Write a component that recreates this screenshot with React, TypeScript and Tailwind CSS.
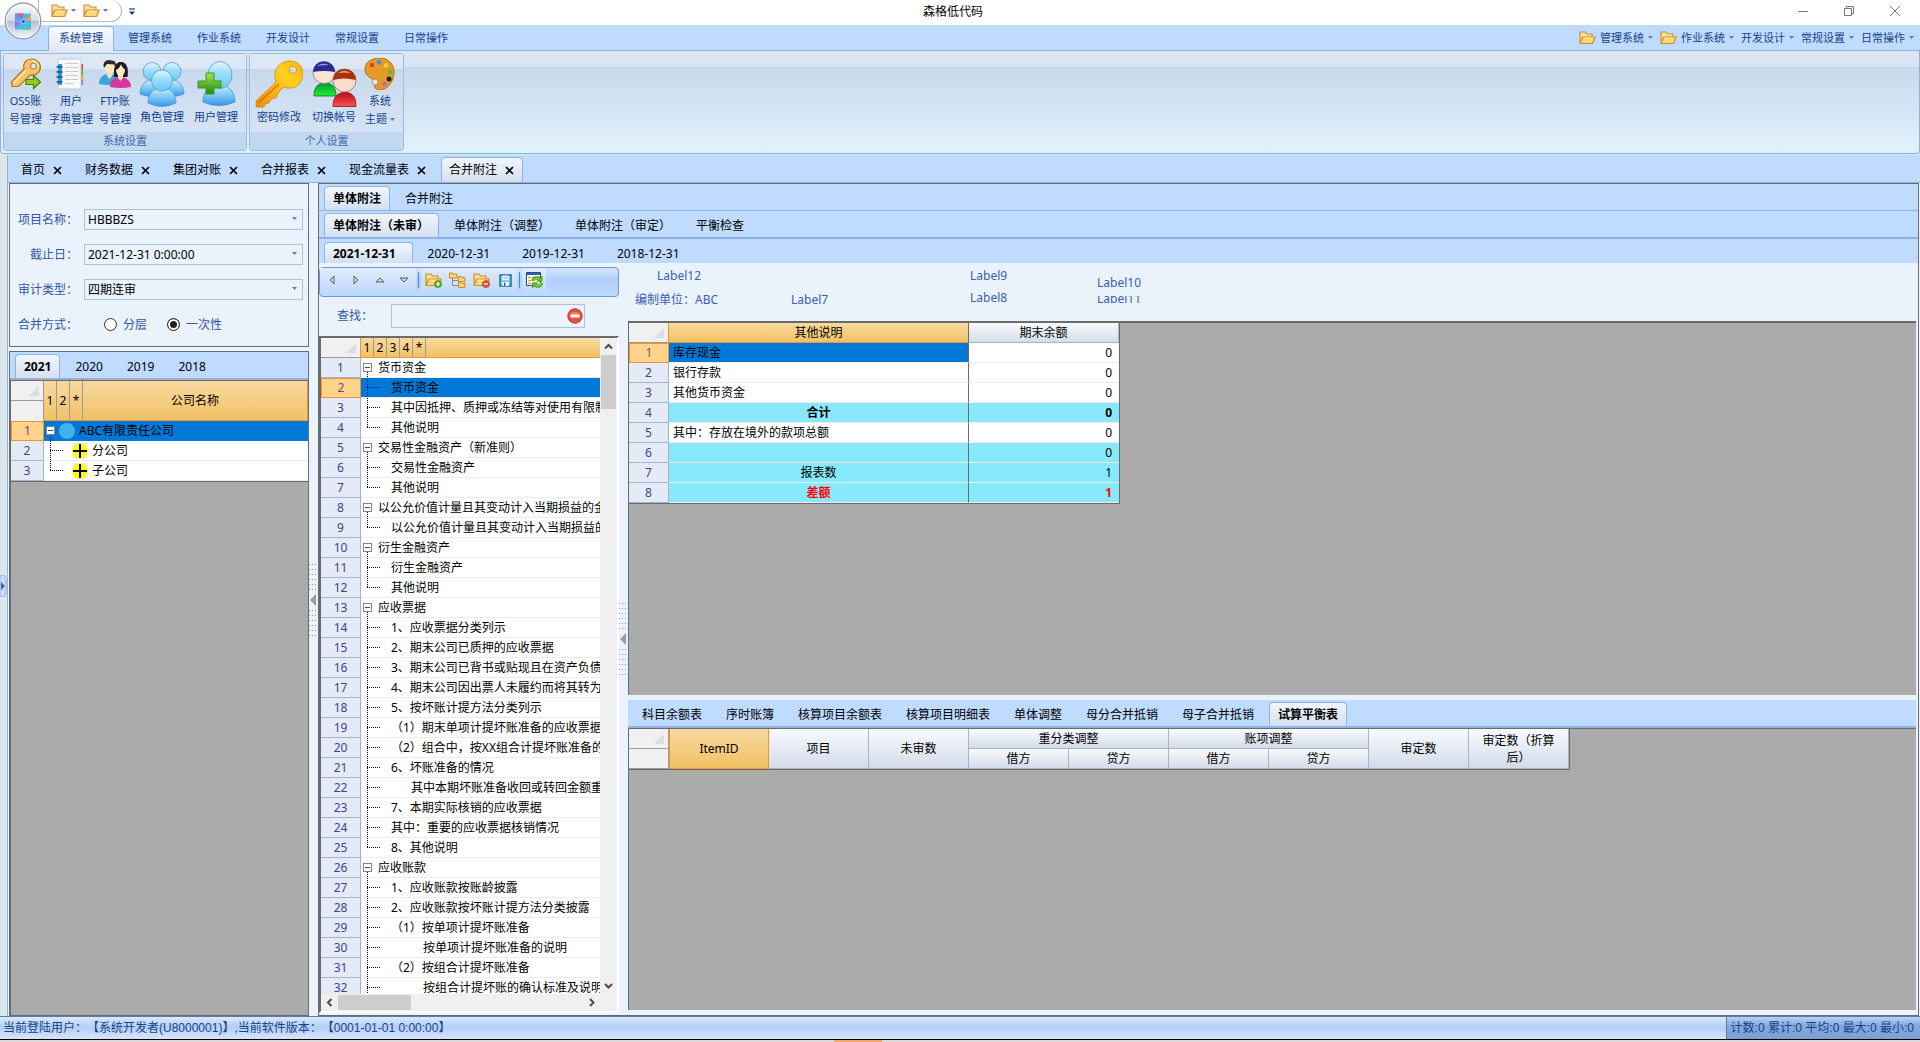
import { useState, type ReactNode } from "react";

type TreeRow = { text: string; level: 0 | 1; indent?: "md" | "lg" };

const RIBBON_TABS = ["系统管理", "管理系统", "作业系统", "开发设计", "常规设置", "日常操作"];
const DOC_TABS = ["首页", "财务数据", "集团对账", "合并报表", "现金流量表", "合并附注"];
const YEARS = ["2021", "2020", "2019", "2018"];
const DETAIL_TABS = [
  "科目余额表",
  "序时账簿",
  "核算项目余额表",
  "核算项目明细表",
  "单体调整",
  "母分合并抵销",
  "母子合并抵销",
  "试算平衡表",
];

const NOTES: TreeRow[] = [
  { text: "货币资金", level: 0 },
  { text: "货币资金", level: 1 },
  { text: "其中因抵押、质押或冻结等对使用有限制的款项", level: 1 },
  { text: "其他说明", level: 1 },
  { text: "交易性金融资产（新准则）", level: 0 },
  { text: "交易性金融资产", level: 1 },
  { text: "其他说明", level: 1 },
  { text: "以公允价值计量且其变动计入当期损益的金融资产", level: 0 },
  { text: "以公允价值计量且其变动计入当期损益的金融资产", level: 1 },
  { text: "衍生金融资产", level: 0 },
  { text: "衍生金融资产", level: 1 },
  { text: "其他说明", level: 1 },
  { text: "应收票据", level: 0 },
  { text: "1、应收票据分类列示", level: 1 },
  { text: "2、期末公司已质押的应收票据", level: 1 },
  { text: "3、期末公司已背书或贴现且在资产负债表日", level: 1 },
  { text: "4、期末公司因出票人未履约而将其转为应收", level: 1 },
  { text: "5、按坏账计提方法分类列示", level: 1 },
  { text: "（1）期末单项计提坏账准备的应收票据", level: 1 },
  { text: "（2）组合中，按XX组合计提坏账准备的应收", level: 1 },
  { text: "6、坏账准备的情况", level: 1 },
  { text: "其中本期坏账准备收回或转回金额重要的", level: 1, indent: "md" },
  { text: "7、本期实际核销的应收票据", level: 1 },
  { text: "其中：重要的应收票据核销情况", level: 1 },
  { text: "8、其他说明", level: 1 },
  { text: "应收账款", level: 0 },
  { text: "1、应收账款按账龄披露", level: 1 },
  { text: "2、应收账款按坏账计提方法分类披露", level: 1 },
  { text: "（1）按单项计提坏账准备", level: 1 },
  { text: "按单项计提坏账准备的说明", level: 1, indent: "lg" },
  { text: "（2）按组合计提坏账准备", level: 1 },
  { text: "按组合计提坏账的确认标准及说明", level: 1, indent: "lg" },
];

const BALANCES = [
  { name: "库存现金", value: 0, style: "selected" },
  { name: "银行存款", value: 0, style: "plain" },
  { name: "其他货币资金", value: 0, style: "plain" },
  { name: "合计", value: 0, style: "total" },
  { name: "其中：存放在境外的款项总额", value: 0, style: "plain" },
  { name: "", value: 0, style: "sum" },
  { name: "报表数", value: 1, style: "sum" },
  { name: "差额", value: 1, style: "diff" },
];

const BALANCE_STYLES: Record<string, { name: string; value: string }> = {
  selected: { name: "bg-[#0078d7] text-left", value: "bg-white" },
  plain: { name: "bg-white text-left", value: "bg-white" },
  total: { name: "bg-[#87e9fb] text-center font-bold", value: "bg-[#87e9fb] font-bold" },
  sum: { name: "bg-[#87e9fb] text-center", value: "bg-[#87e9fb]" },
  diff: {
    name: "bg-[#87e9fb] text-center font-bold text-[#ff0000]",
    value: "bg-[#87e9fb] font-bold text-[#ff0000]",
  },
};

const ROW_HEAD = "border-r border-b border-[#9fb6d0] bg-[#e4ebf7] p-0 text-center font-normal text-[#433f90]";
const ROW_HEAD_ACTIVE = "border border-[#ee9436] bg-[#ffd48a] p-0 text-center font-normal text-[#6b4a82]";
const GOLD = "bg-linear-to-b from-[#f9d99f] to-[#f1c263]";
const SILVER = "border-r border-b border-[#9fb6cd] bg-linear-to-b from-[#f8fafd] to-[#d5dce9] p-0 text-center font-normal";

/* ---------- icons ---------- */

function Caret({ className = "text-[#5b7fb5]" }: { className?: string }) {
  return (
    <svg className={`shrink-0 ${className}`} width="5" height="3" viewBox="0 0 5 3" aria-hidden="true">
      <path d="M0 0h5L2.5 3z" fill="currentColor" />
    </svg>
  );
}

function FolderIcon({ badge }: { badge?: "plus" | "minus" }) {
  return (
    <svg className="shrink-0" width="17" height="16" viewBox="0 0 17 16" aria-hidden="true">
      <path d="M1 13V2h5l1.500 2H13v3" fill="#f9e0a0" stroke="#cf8f2c" strokeWidth="1.200" />
      <path d="M1 13.500 3.800 7h12.400L13.500 13.500z" fill="#fbd872" stroke="#cf8f2c" strokeWidth="1.200" strokeLinejoin="round" />
      <path d="M4.800 8.300h9.400" stroke="#fff0bb" />
      {badge && (
        <>
          <circle cx="13" cy="12" r="3.600" fill={badge === "plus" ? "#5dae1f" : "#e2503a"} stroke={badge === "plus" ? "#3d7f12" : "#b5321f"} strokeWidth=".6" />
          <path d={badge === "plus" ? "M11 12h4M13 10v4" : "M11 12h4"} stroke="#fff" strokeWidth="1.200" />
        </>
      )}
    </svg>
  );
}

function FolderTreeIcon() {
  return (
    <svg width="17" height="16" viewBox="0 0 17 16" aria-hidden="true">
      <path d="M3.500 6v7.500H10M3.500 8.500H10" fill="none" stroke="#8a8a8a" />
      <path d="M.5 1h2.500l1 1H8v4H.5z" fill="#fbd872" stroke="#c98a2b" />
      <path d="M9.500 4.500H12l.8 1H16v4H9.500zM9.500 10.500H12l.8 1H16v4H9.500z" fill="#fbd872" stroke="#c98a2b" />
    </svg>
  );
}

function SaveIcon() {
  return (
    <svg width="13" height="13" viewBox="0 0 13 13" aria-hidden="true">
      <rect x="1" y="1" width="11" height="11" fill="#8cc8ec" stroke="#1d6fa5" strokeWidth="1.500" />
      <path d="M3.500 1.500h6v4.500h-6z" fill="#f4fafe" />
      <path d="M4.500 3h4M4.500 4.500h4" stroke="#7ab0d4" strokeWidth=".7" />
      <path d="M3.500 8h6v4h-6z" fill="#fff" />
      <path d="M5 8.500h1.500V12H5z" fill="#1d6fa5" />
    </svg>
  );
}

function RefreshTableIcon() {
  return (
    <svg width="17" height="16" viewBox="0 0 17 16" aria-hidden="true">
      <path d="M.5.5h14v13H.5z" fill="#fff" stroke="#1f4f8a" />
      <path d="M1 1h13v2H1z" fill="#2b66a8" />
      <path d="M2 5.500h3M2 8.500h3M2 11.500h3M6 5.500h3" stroke="#d9a13a" strokeWidth="1.300" />
      <path d="M7 9c.5-3 4-4 6.300-2" fill="none" stroke="#3f8a10" strokeWidth="3.400" />
      <path d="M16 4.200v5h-5z" fill="#6ec226" stroke="#3f8a10" strokeWidth=".8" />
      <path d="M7.200 8.800c.6-2.400 3.800-3.300 6-1.600" fill="none" stroke="#7ed333" strokeWidth="2" />
      <path d="M15.500 11c-.5 3-4 4-6.300 2" fill="none" stroke="#3f8a10" strokeWidth="3.400" />
      <path d="M6.500 15.800v-5h5z" fill="#6ec226" stroke="#3f8a10" strokeWidth=".8" />
      <path d="M15.300 11.200c-.6 2.400-3.800 3.300-6 1.600" fill="none" stroke="#7ed333" strokeWidth="2" />
    </svg>
  );
}

function OrbIcon() {
  return (
    <svg width="38" height="38" viewBox="0 0 38 38" aria-hidden="true">
      <defs>
        <linearGradient id="orb" x1="0" y1="0" x2="0" y2="1">
          <stop offset="0" stopColor="#fafbfc" />
          <stop offset=".48" stopColor="#d9dee6" />
          <stop offset=".5" stopColor="#b4bfce" />
          <stop offset="1" stopColor="#f4f8fb" />
        </linearGradient>
      </defs>
      <circle cx="19" cy="19" r="17.800" fill="url(#orb)" stroke="#8f99a8" strokeWidth="1.200" />
      <circle cx="19" cy="19" r="16.500" fill="none" stroke="#fff" strokeOpacity=".8" />
      <path d="M11 11.500h16v16H11z" fill="#4db6f5" />
      <path d="M13 11.500h7q-3 3.500-.5 8-3-5-6.500-8z" fill="#f4573a" />
      <path d="M27 12.500v7q-4-2.500-7.500.3 4-3 7.500-7.300z" fill="#f7a63a" />
      <path d="M25.500 27.500h-6q3-3.500 0-8 2 5 6 8z" fill="#41e06c" />
      <path d="M11 26.500v-7q4 2.500 8 0-5 2-8 7z" fill="#c65be0" />
      <path d="M11 11.500h4q1 5 4 8-4-2-8-2z" fill="#7a7cf0" opacity=".6" />
      <circle cx="19.300" cy="19.500" r="2.200" fill="#3d4fe0" stroke="#dfe6ff" strokeWidth=".8" />
    </svg>
  );
}

function OssKeyIcon() {
  return (
    <svg width="32" height="32" viewBox="0 0 32 32" aria-hidden="true">
      <path
        d="M14 11C12.500 4.500 17 .8 22 1c5.500.3 9.300 5 8.200 10-1 4.500-5.200 7-9.700 5.900L8.500 28.500H2.200L1.500 24z"
        fill="#f6c465"
        stroke="#b5751d"
        strokeWidth="1.200"
      />
      <path d="M3.500 25 16 12.500" stroke="#fff0c2" strokeWidth="1.500" />
      <path d="M22 3c4 0 6.500 3 6.300 6.500" fill="none" stroke="#fff0c2" strokeWidth="1.500" />
      <circle cx="23.500" cy="8" r="3" fill="#dbe6f4" stroke="#b5751d" />
      <path d="M16 21.500h7.500v-4L30.500 24l-7 6.500v-4H16z" fill="#8fce1c" stroke="#4b7d0c" strokeWidth="1.200" />
    </svg>
  );
}

function NotebookIcon() {
  return (
    <svg width="32" height="32" viewBox="0 0 32 32" aria-hidden="true">
      <path d="M25 6h3v5h-3z" fill="#e2453a" />
      <path d="M25 11h3v6h-3z" fill="#45b549" />
      <path d="M25 17h3v5h-3z" fill="#f0a030" />
      <path d="M25 22h3v5h-3z" fill="#a06fc4" />
      <rect x="3" y="1" width="23" height="30" rx="1" fill="#f8f8f8" stroke="#c3c8cf" />
      <path d="M10 5.500h13M10 9.500h13M10 13.500h13M10 17.500h13M10 21.500h13M10 25.500h9" stroke="#c6cbd2" />
      <path d="M3 6h4v21H3z" fill="#2f9bd6" />
      <path d="M1.500 9h6M1.500 14h6M1.500 19h6M1.500 24h6" stroke="#1b4f7c" strokeWidth="1.500" />
    </svg>
  );
}

function CoupleIcon() {
  return (
    <svg width="32" height="32" viewBox="0 0 32 32" aria-hidden="true">
      <path d="M0 26c0-7 5-10 10-10s9 3 9 10q-9 2-19 0z" fill="#3aa5dc" />
      <path d="M8 15h5v3l-2.500 3L8 18z" fill="#f7e2b9" />
      <circle cx="11" cy="9.500" r="5.500" fill="#fbeac4" />
      <path d="M5 10C3 4 8 1 12 2.500c4-.5 6 3 4.500 7L15 6.500 8 6z" fill="#2a2a2c" />
      <path d="M15 19C14 9 17 4 22 4s8 5 6.500 15z" fill="#1f1c20" />
      <path d="M11 29c0-7 5-10 10-10s11 3 11 10q-10 2-21 0z" fill="#d9369c" />
      <path d="M19 17h5v3l-2.500 3L19 20z" fill="#f7e2b9" />
      <ellipse cx="21.500" cy="12" rx="4.500" ry="6" fill="#fbeac4" />
      <path d="M16.500 12q4-1 5.500-6 1 4 5 6c0-7-3-8-5.500-8s-5 2-5 8z" fill="#1f1c20" />
    </svg>
  );
}

function BlueDefs() {
  return (
    <defs>
      <linearGradient id="bluePerson" x1="0" y1="0" x2="0" y2="1">
        <stop offset="0" stopColor="#c9eefc" />
        <stop offset=".5" stopColor="#7cc8f3" />
        <stop offset="1" stopColor="#3d93ea" />
      </linearGradient>
      <linearGradient id="blueFace" x1="0" y1="0" x2="0" y2="1">
        <stop offset="0" stopColor="#e2f9fe" />
        <stop offset=".45" stopColor="#9adcf7" />
        <stop offset="1" stopColor="#6cc8f5" />
      </linearGradient>
    </defs>
  );
}

function GroupIcon() {
  return (
    <svg width="48" height="48" viewBox="0 0 48 48" aria-hidden="true">
      <BlueDefs />
      <g stroke="#4f9bd6" strokeWidth=".8">
        <path d="M2 34c0-8 5-14 12-14s11 6 11 14q-11 5-23 0z" fill="url(#bluePerson)" />
        <circle cx="14" cy="11.500" r="9" fill="url(#blueFace)" />
        <path d="M23 34c0-8 4-14 11-14s12 6 12 14q-12 5-23 0z" fill="url(#bluePerson)" />
        <circle cx="34" cy="11.500" r="9" fill="url(#blueFace)" />
        <path d="M10 43c0-9 5-15 14-15s14 6 14 15q-14 7-28 0z" fill="url(#bluePerson)" />
        <circle cx="24" cy="20.500" r="10.500" fill="url(#blueFace)" />
      </g>
    </svg>
  );
}

function AddUserIcon() {
  return (
    <svg width="48" height="48" viewBox="0 0 48 48" aria-hidden="true">
      <defs>
        <linearGradient id="greenPlus" x1="0" y1="0" x2="0" y2="1">
          <stop offset="0" stopColor="#a6e34c" />
          <stop offset="1" stopColor="#1f8a12" />
        </linearGradient>
      </defs>
      <path d="M11 42c0-10 6-17 16-17s16 7 16 17q-16 7-32 0z" fill="url(#bluePerson)" stroke="#3d8bd0" strokeWidth=".8" />
      <ellipse cx="28" cy="15" rx="12" ry="13.500" fill="url(#blueFace)" stroke="#4f9bd6" strokeWidth=".8" />
      <path d="M14 13h8v8h7v7h-7v6h-8v-6H6v-7h8z" fill="url(#greenPlus)" stroke="#3b9a1e" />
    </svg>
  );
}

function BigKeyIcon() {
  return (
    <svg width="48" height="48" viewBox="0 0 48 48" aria-hidden="true">
      <defs>
        <linearGradient id="goldKey" x1="1" y1="0" x2="0" y2="1">
          <stop offset="0" stopColor="#ffb010" />
          <stop offset=".35" stopColor="#ffd21c" />
          <stop offset="1" stopColor="#f58a07" />
        </linearGradient>
      </defs>
      <path
        fillRule="evenodd"
        d="M21 22C17 11 24 1 35 1c8 0 13 6 13 13 0 10-9 17-19 13l-6 6-2 5-5 1-2 4-4 1-1 3H1v-6zM38 6.500a3.500 3.500 0 1 0 .1 0z"
        fill="url(#goldKey)"
        stroke="#c78a23"
        strokeWidth=".8"
      />
      <path d="M3 43 24 24" stroke="#d86b08" strokeWidth="1.200" />
    </svg>
  );
}

function SwitchUserIcon() {
  return (
    <svg width="48" height="48" viewBox="0 0 48 48" aria-hidden="true">
      <defs>
        <linearGradient id="greenBody" x1="0" y1="0" x2="0" y2="1">
          <stop offset="0" stopColor="#0c9c25" />
          <stop offset="1" stopColor="#1df03a" />
        </linearGradient>
        <linearGradient id="redBody" x1="0" y1="0" x2="0" y2="1">
          <stop offset="0" stopColor="#b90f1b" />
          <stop offset="1" stopColor="#ff5050" />
        </linearGradient>
      </defs>
      <path d="M4 36c0-9 4-13 11-13s11 4 11 13z" fill="url(#greenBody)" stroke="#0a6d1a" strokeWidth=".8" />
      <circle cx="14" cy="12.500" r="11" fill="#fbe4d4" stroke="#8e7b86" strokeWidth=".8" />
      <path d="M3 12C3.500 5 8 1.500 14 1.500S25 6 25 12Q14 10 3 12z" fill="#2a2a94" />
      <path d="M7 6q6-4 12-1-6 0-12 1z" fill="#9a9ae6" />
      <path d="M23 46.500c0-9 4-14 12-14s11 5 11 14z" fill="url(#redBody)" stroke="#8d0f18" strokeWidth=".8" />
      <circle cx="34.500" cy="20.500" r="11.500" fill="#fbdccb" stroke="#8e6f66" strokeWidth=".8" />
      <path d="M23 20c.5-7 5-11 11.500-11S45.500 13 46 20Q34 17 23 20z" fill="#a8320f" />
      <path d="M28 13q6-4 13 0-7-1-13 0z" fill="#f0a98e" />
    </svg>
  );
}

function PaletteIcon() {
  return (
    <svg width="32" height="32" viewBox="0 0 32 32" aria-hidden="true">
      <path
        d="M1 11C1 4 8 0 16 0c9 0 14 7 14 14 0 10-7 18-14 18-4 0-6-2-5-5 0-3-1-5-4-7-4-2-6-5-6-9z"
        fill="#e59a26"
        stroke="#b56d10"
      />
      <circle cx="11" cy="24" r="3" fill="#dbe6f4" stroke="#b56d10" strokeWidth=".6" />
      <circle cx="8" cy="7" r="2.200" fill="#d93a2e" />
      <circle cx="15" cy="4.500" r="2.200" fill="#3d8fe0" />
      <circle cx="22" cy="7.500" r="2.200" fill="#f2d531" />
      <circle cx="26" cy="14" r="2.200" fill="#4bbf3c" />
      <circle cx="25" cy="21" r="2.500" fill="#1d1b1a" />
      <circle cx="20.500" cy="26" r="2.200" fill="#a763d0" />
    </svg>
  );
}

function CloseGlyph() {
  return (
    <svg width="9" height="9" viewBox="0 0 9 9" aria-hidden="true">
      <path d="M1 1l7 7M8 1L1 8" stroke="#000" strokeWidth="1.700" />
    </svg>
  );
}

function Chevron({ d }: { d: string }) {
  return (
    <svg width="9" height="9" viewBox="0 0 9 9" aria-hidden="true">
      <path d={d} fill="none" stroke="#4c4c4c" strokeWidth="2" />
    </svg>
  );
}

/* ---------- shared pieces ---------- */

type TabStripProps = {
  tabs: string[];
  initial: string;
  className?: string;
  tabClassName?: string;
};

function TabStrip({ tabs, initial, className = "", tabClassName = "h-6 px-2" }: TabStripProps) {
  const [active, setActive] = useState(initial);
  return (
    <div role="tablist" className={`flex shrink-0 items-end gap-1.5 border-[#8fb2e6] bg-[#bfdbff] pl-[5px] ${className}`}>
      {tabs.map((tab) => (
        <button
          key={tab}
          type="button"
          role="tab"
          aria-selected={active === tab}
          onClick={() => setActive(tab)}
          className={`border border-b-0 whitespace-nowrap ${tabClassName} ${
            active === tab
              ? "rounded-t border-[#8fb2e6] bg-linear-to-b from-[#f1f6fd] to-[#d3e0f1] font-bold"
              : "border-transparent"
          }`}
        >
          {tab}
        </button>
      ))}
    </div>
  );
}

function Corner() {
  return (
    <svg className="mr-1 mb-1 ml-auto" width="10" height="10" viewBox="0 0 10 10" aria-hidden="true">
      <path d="M10 0v10H0z" fill="#d9dde6" />
    </svg>
  );
}

function Branch({ root, last }: { root: boolean; last: boolean }) {
  if (root) {
    return (
      <svg className="mr-1 shrink-0" width="13" height="20" viewBox="0 0 13 20" aria-hidden="true">
        <rect x="2.500" y="5.500" width="8" height="8" fill="#fff" stroke="#848484" />
        <path d="M4 9.500h5" stroke="#2f4f9c" />
        {!last && <path d="M6.500 14v6" stroke="#000080" strokeDasharray="1 1" />}
      </svg>
    );
  }
  return (
    <svg className="shrink-0" width="30" height="20" viewBox="0 0 30 20" aria-hidden="true">
      <path d={last ? "M6.500 0v10" : "M6.500 0v20"} stroke="#000080" strokeDasharray="1 1" />
      <path d="M6 9.500h13" stroke="#000080" strokeDasharray="1 1" />
    </svg>
  );
}

function SplitterGrip() {
  const dots = [0, 5, 10, 15, 20, 25];
  return (
    <svg className="text-[#8f9aa8]" width="8" height="72" viewBox="0 0 8 72" aria-hidden="true">
      {dots.map((y) => (
        <path key={y} d={`M0 ${y + 0.5}h8M0 ${y + 46.5}h8`} stroke="currentColor" strokeDasharray="1 2" />
      ))}
      <path d="M7 30v12L1 36z" fill="#9a9a9a" />
    </svg>
  );
}

/* ---------- window chrome ---------- */

function TitleBar() {
  return (
    <header className="relative flex h-[25px] shrink-0 bg-white">
      <button type="button" aria-label="应用程序" className="absolute top-0.5 left-1 z-10 rounded-full">
        <OrbIcon />
      </button>
      <div className="flex flex-1 items-start">
        <div className="ml-[38px] flex h-[22px] w-[84px] items-center gap-1 rounded-r-full border border-t-0 border-[#b5b8bd] pl-3">
          <button type="button" aria-label="打开管理系统" className="flex items-center gap-[3px]">
            <FolderIcon />
            <Caret />
          </button>
          <button type="button" aria-label="打开作业系统" className="ml-[3px] flex items-center gap-[3px]">
            <FolderIcon />
            <Caret />
          </button>
        </div>
        <button type="button" aria-label="自定义快速访问工具栏" className="mt-2 ml-[7px]">
          <svg width="6" height="7" viewBox="0 0 6 7" aria-hidden="true">
            <path d="M0 1h6" stroke="#1b3c78" strokeWidth="1.200" />
            <path d="M0 3.500h6L3 7z" fill="#1b3c78" />
          </svg>
        </button>
      </div>
      <h1 className="mr-3 flex h-6 items-center text-xs text-black">森格低代码</h1>
      <div className="flex h-[22px] flex-1 justify-end pr-0.5">
        <button type="button" aria-label="最小化" className="flex w-[46px] items-center justify-center">
          <svg width="10" height="10" viewBox="0 0 10 10"><path d="M0 5.500h10" stroke="#777" /></svg>
        </button>
        <button type="button" aria-label="还原" className="flex w-[46px] items-center justify-center">
          <svg width="10" height="10" viewBox="0 0 10 10">
            <path d="M.5 2.500h7v7h-7zM2.500 2.500v-2h7v7h-2" fill="none" stroke="#777" />
          </svg>
        </button>
        <button type="button" aria-label="关闭" className="flex w-[46px] items-center justify-center">
          <svg width="10" height="10" viewBox="0 0 10 10"><path d="M0 0l10 10M10 0L0 10" stroke="#777" /></svg>
        </button>
      </div>
    </header>
  );
}

function RibbonTabs() {
  const [active, setActive] = useState("系统管理");
  return (
    <nav className="flex h-[26px] shrink-0 items-end justify-between border-b border-[#8db2e3] bg-[#bfdbff] pr-1.5 pl-12 text-[11px] text-[#15428b]">
      <div className="flex gap-[3px]">
        {RIBBON_TABS.map((tab) => (
          <button
            key={tab}
            type="button"
            onClick={() => setActive(tab)}
            className={`-mb-px h-[25px] border border-b-0 px-2.5 pb-0.5 ${
              active === tab
                ? "rounded-t border-[#8db2e3] bg-linear-to-b from-[#f6faff] to-[#dfe9f5]"
                : "border-transparent"
            }`}
          >
            {tab}
          </button>
        ))}
      </div>
      <div className="flex h-[25px] items-center gap-[7px]">
        {RIBBON_TABS.slice(1).map((item, i) => (
          <button key={item} type="button" className="flex items-center gap-1">
            {i < 2 && <FolderIcon />}
            {item}
            <Caret />
          </button>
        ))}
      </div>
    </nav>
  );
}

type RibbonItemProps = { icon: ReactNode; lines: string[]; width: string; menu?: boolean };

function RibbonItem({ icon, lines, width, menu }: RibbonItemProps) {
  return (
    <button type="button" className={`flex flex-col items-center pt-1 ${width}`}>
      <span className={lines.length === 1 ? "pt-0.5" : "mb-0.5"}>{icon}</span>
      {lines.map((line, i) => (
        <span key={line} className="flex items-center gap-[3px] leading-[18px] whitespace-nowrap">
          {line}
          {menu && i === lines.length - 1 && <Caret />}
        </span>
      ))}
    </button>
  );
}

function RibbonGroup({ title, children }: { title: string; children: ReactNode }) {
  return (
    <section className="flex flex-col overflow-hidden rounded-[3px] border border-[#9ebbdd] bg-linear-to-b from-[#dde8f4] from-15% via-[#c9d9ec] via-16% to-[#d9e7f7]">
      <div className="flex flex-1 pr-[3px]">{children}</div>
      <h2 className="h-[18px] bg-[#c2d8f1] text-center leading-[18px] text-[#3e6aaa]">{title}</h2>
    </section>
  );
}

function Ribbon() {
  return (
    <div className="flex h-[103px] shrink-0 gap-0.5 rounded-b border border-t-0 border-[#8db2e3] border-b-[#7ab8dc] bg-linear-to-b from-[#dbe6f3] from-15% via-[#c8d9ed] via-16% to-[#e2f2fd] px-0.5 pt-0.5 pb-0.5 text-[11px] text-[#15428b]">
      <RibbonGroup title="系统设置">
        <RibbonItem width="w-[43px]" icon={<OssKeyIcon />} lines={["OSS账", "号管理"]} />
        <RibbonItem width="w-12" icon={<NotebookIcon />} lines={["用户", "字典管理"]} />
        <RibbonItem width="w-10" icon={<CoupleIcon />} lines={["FTP账", "号管理"]} />
        <RibbonItem width="w-[54px]" icon={<GroupIcon />} lines={["角色管理"]} />
        <RibbonItem width="w-[54px]" icon={<AddUserIcon />} lines={["用户管理"]} />
      </RibbonGroup>
      <RibbonGroup title="个人设置">
        <RibbonItem width="w-[58px]" icon={<BigKeyIcon />} lines={["密码修改"]} />
        <RibbonItem width="w-[52px]" icon={<SwitchUserIcon />} lines={["切换帐号"]} />
        <RibbonItem width="w-10" icon={<PaletteIcon />} lines={["系统", "主题"]} menu />
      </RibbonGroup>
    </div>
  );
}

function DocumentTabs() {
  const [active, setActive] = useState("合并附注");
  return (
    <div className="flex h-7 shrink-0 items-end gap-1.5 border-b border-[#8fb2e6] bg-[#bfdbff] pl-[5px]">
      {DOC_TABS.map((tab) => (
        <div
          key={tab}
          className={`flex h-[25px] items-center gap-2 border border-b-0 pr-2 pl-[7px] ${
            active === tab
              ? "rounded-t border-[#8fb2e6] bg-linear-to-b from-[#f1f6fd] to-[#d3e0f1]"
              : "border-transparent"
          }`}
        >
          <button type="button" onClick={() => setActive(tab)}>
            {tab}
          </button>
          <button type="button" aria-label={`关闭${tab}`}>
            <CloseGlyph />
          </button>
        </div>
      ))}
    </div>
  );
}

/* ---------- left column ---------- */

function Field({ id, label, value }: { id: string; label: string; value: string }) {
  return (
    <div className="flex items-center">
      <label htmlFor={id} className="w-[68px] text-right text-[#2f56a3]">
        {label}：
      </label>
      <div className="relative ml-1.5 flex-1">
        <select id={id} className="block h-[21px] w-full appearance-none border border-[#abc1de] bg-[#eaf2fb] pl-[3px] text-xs text-black">
          <option>{value}</option>
        </select>
        <span className="pointer-events-none absolute top-2 right-1.5">
          <Caret />
        </span>
      </div>
    </div>
  );
}

function Radio({ label, checked }: { label: string; checked?: boolean }) {
  return (
    <label className="flex items-center gap-1.5">
      <input
        type="radio"
        name="mergeMode"
        defaultChecked={checked}
        className="size-[13px] appearance-none rounded-full border border-[#333] bg-white checked:bg-[#222] checked:shadow-[inset_0_0_0_2px_#fff]"
      />
      {label}
    </label>
  );
}

function FilterPanel() {
  return (
    <form className="flex h-[164px] shrink-0 flex-col gap-3.5 border border-[#6b6b6b] bg-[#eaf2fb] pt-[25px] pr-[5px]">
      <Field id="project" label="项目名称" value="HBBBZS" />
      <Field id="deadline" label="截止日" value="2021-12-31 0:00:00" />
      <Field id="auditType" label="审计类型" value="四期连审" />
      <div role="radiogroup" aria-labelledby="mergeLabel" className="flex h-[21px] items-center text-[#2f56a3]">
        <span id="mergeLabel" className="w-[68px] text-right">合并方式：</span>
        <div className="ml-[26px] flex gap-5">
          <Radio label="分层" />
          <Radio label="一次性" checked />
        </div>
      </div>
    </form>
  );
}

function CompanyTree() {
  return (
    <section className="flex min-h-0 flex-1 flex-col border border-[#6b6b6b] bg-[#ababab]">
      <TabStrip tabs={YEARS} initial="2021" className="h-[27px] border-b" />
      <div className="mt-px flex-1 border-t border-l border-[#6b6b6b]">
        <table className="w-full table-fixed border-separate border-spacing-0 border-b border-[#6b6b6b]">
          <colgroup>
            <col className="w-[33px]" />
            <col className="w-[13px]" />
            <col className="w-[13px]" />
            <col className="w-[13px]" />
            <col />
          </colgroup>
          <thead>
            <tr className="h-5">
              <td className="border-r border-b border-[#9a9a9a] bg-[#f0f0f0] p-0 align-bottom">
                <Corner />
              </td>
              {["1", "2", "*"].map((n) => (
                <th key={n} rowSpan={2} className={`border-r border-b border-r-[#9a9a9a] border-b-[#ee9436] p-0 text-center font-normal ${GOLD}`}>
                  {n}
                </th>
              ))}
              <th rowSpan={2} className={`border-r border-b border-[#ee9436] p-0 font-normal ${GOLD}`}>
                公司名称
              </th>
            </tr>
            <tr className="h-5">
              <td className="border-r border-[#9a9a9a] bg-[#f0f0f0] p-0" />
            </tr>
          </thead>
          <tbody>
            <tr className="h-5">
              <th className={ROW_HEAD_ACTIVE}>1</th>
              <td colSpan={4} className="bg-[#0078d7] p-0">
                <div className="flex h-5 items-center">
                  <Branch root last={false} />
                  <span className="mr-1 -ml-0.5 size-4 rounded-full bg-[#43b2e6]" />
                  ABC有限责任公司
                </div>
              </td>
            </tr>
            {["分公司", "子公司"].map((name, i) => (
              <tr key={name} className="h-5">
                <th className={ROW_HEAD}>{i + 2}</th>
                <td colSpan={4} className="border-b border-[#ececec] bg-white p-0">
                  <div className="-mb-px flex h-5 items-center">
                    <Branch root={false} last={i === 1} />
                    <svg className="mr-1 -ml-0.5" width="16" height="16" viewBox="0 0 16 16" aria-hidden="true">
                      <path d="M0 0h16v16H0z" fill="#efefef" />
                      <circle cx="8" cy="8" r="7.800" fill="#ffff00" />
                      <path d="M1 8h14M8 1v14" stroke="#000" strokeWidth="2" />
                    </svg>
                    {name}
                  </div>
                </td>
              </tr>
            ))}
          </tbody>
        </table>
      </div>
    </section>
  );
}

/* ---------- notes list ---------- */

function NotesToolbar() {
  const arrows = [
    { label: "第一页", d: "M7 1v8L3 5z" },
    { label: "下一页", d: "M3 1v8l4-4z" },
    { label: "上移", d: "M1 7h8L5 3z" },
    { label: "下移", d: "M1 3h8L5 7z" },
  ];
  return (
    <div className="mt-1 flex h-[30px] shrink-0 items-start rounded-sm border border-[#6f9ad3] bg-linear-to-b from-[#cfe2fd] from-10% via-[#b0d0fc] via-40% to-[#bddafe] text-[#5c5f66]">
      <div className="flex h-6 items-center bg-linear-to-b from-[#dfebfc] to-[#c3dafc]">
        {arrows.map((a) => (
          <button key={a.label} type="button" aria-label={a.label} className="flex h-6 w-6 items-center justify-center">
            <svg width="10" height="10" viewBox="0 0 10 10">
              <path d={a.d} fill="#d5d5d5" stroke="#5c5f66" />
            </svg>
          </button>
        ))}
      </div>
      <span className="mt-1 ml-0.5 h-4 w-px bg-[#4f86cf]" />
      <div className="ml-0.5 flex h-6 items-center bg-linear-to-b from-[#dfebfc] to-[#c3dafc]">
        <button type="button" aria-label="新增" className="flex h-6 w-6 items-center justify-center"><FolderIcon badge="plus" /></button>
        <button type="button" aria-label="新增下级" className="flex h-6 w-6 items-center justify-center"><FolderTreeIcon /></button>
        <button type="button" aria-label="删除" className="flex h-6 w-6 items-center justify-center"><FolderIcon badge="minus" /></button>
        <button type="button" aria-label="保存" className="flex h-6 w-6 items-center justify-center"><SaveIcon /></button>
      </div>
      <span className="mt-1 ml-0.5 h-4 w-px bg-[#4f86cf]" />
      <button type="button" aria-label="刷新" className="ml-0.5 flex h-6 w-6 items-center justify-center bg-linear-to-b from-[#dfebfc] to-[#c3dafc]">
        <RefreshTableIcon />
      </button>
    </div>
  );
}

const INDENTS = { none: "", md: "pl-5", lg: "pl-8" };

function NotesTree() {
  return (
    <div className="mt-2 mb-0.5 flex min-h-0 flex-1 flex-col border-2 border-t-[#6b6b6b] border-r-white border-b-white border-l-[#6b6b6b] bg-[#f0f0f0]">
      <div className="flex min-h-0 flex-1">
        <div className="min-w-0 flex-1 overflow-hidden bg-white">
          <table className="w-full table-fixed border-separate border-spacing-0">
            <colgroup>
              <col className="w-10" />
              <col className="w-[13px]" />
              <col className="w-[13px]" />
              <col className="w-[13px]" />
              <col className="w-[13px]" />
              <col className="w-[13px]" />
              <col />
            </colgroup>
            <thead>
              <tr className="h-5">
                <td className="border-r border-b border-[#9a9a9a] border-r-[#ee9436] bg-[#f0f0f0] p-0 align-bottom">
                  <Corner />
                </td>
                {["1", "2", "3", "4", "*"].map((n) => (
                  <th key={n} className={`border-r border-b border-r-[#9a9a9a] border-b-[#ee9436] p-0 text-center font-normal ${GOLD}`}>
                    {n}
                  </th>
                ))}
                <td className={`border-b border-[#ee9436] p-0 ${GOLD}`} />
              </tr>
            </thead>
            <tbody>
              {NOTES.map((row, i) => {
                const next = NOTES[i + 1];
                const selected = i === 1;
                return (
                  <tr key={i} className="h-5">
                    <th className={selected ? ROW_HEAD_ACTIVE : ROW_HEAD}>{i + 1}</th>
                    <td
                      colSpan={6}
                      className={`overflow-hidden border-b border-[#ececec] p-0 ${selected ? "bg-[#0078d7]" : "bg-white"}`}
                    >
                      <div className="-mb-px flex h-5 items-center whitespace-nowrap">
                        <Branch root={row.level === 0} last={next?.level === 0} />
                        <span className={INDENTS[row.indent ?? "none"]}>{row.text}</span>
                      </div>
                    </td>
                  </tr>
                );
              })}
            </tbody>
          </table>
        </div>
        <div className="flex w-[17px] shrink-0 flex-col items-center bg-[#f0f0f0]">
          <button type="button" aria-label="向上滚动" className="flex h-[17px] items-center">
            <Chevron d="M1 6.500L4.500 3 8 6.500" />
          </button>
          <span className="h-[54px] w-[15px] bg-[#cdcdcd]" />
          <button type="button" aria-label="向下滚动" className="mt-auto flex h-[17px] items-center">
            <Chevron d="M1 3l3.500 3.500L8 3" />
          </button>
        </div>
      </div>
      <div className="flex h-[17px] shrink-0 items-center pr-[17px]">
        <button type="button" aria-label="向左滚动" className="flex w-[17px] justify-center">
          <Chevron d="M6.500 1L3 4.500 6.500 8" />
        </button>
        <span className="h-[15px] w-[73px] bg-[#cdcdcd]" />
        <button type="button" aria-label="向右滚动" className="ml-auto flex w-[17px] justify-center">
          <Chevron d="M3 1l3.500 3.500L3 8" />
        </button>
      </div>
    </div>
  );
}

function NotesColumn() {
  return (
    <section className="flex w-[300px] shrink-0 flex-col">
      <NotesToolbar />
      <div className="mt-[7px] flex h-6 shrink-0 items-center text-[#2f56a3]">
        <label htmlFor="search" className="pl-[18px]">
          查找：
        </label>
        <div className="relative ml-[18px] w-[194px]">
          <input id="search" type="text" className="block h-6 w-full border border-[#abc1de] bg-[#eaf2fb] pr-6 pl-1 outline-none" />
          <button type="button" aria-label="清除" className="absolute top-1 right-0.5">
            <svg width="16" height="16" viewBox="0 0 16 16" aria-hidden="true">
              <circle cx="8" cy="8" r="7.200" fill="#e8503c" stroke="#b83c30" />
              <path d="M3 6.500C4 3 12 3 13 6.500z" fill="#f59384" opacity=".7" />
              <path d="M3.500 6.500h9v3h-9z" fill="#fff" />
            </svg>
          </button>
        </div>
      </div>
      <NotesTree />
    </section>
  );
}

/* ---------- right side ---------- */

function SheetLabels() {
  return (
    <div className="flex h-[58px] shrink-0 pt-1 pl-[7px] leading-[18px] whitespace-nowrap text-[#3a5fae]">
      <div className="w-[156px]">
        <p className="pl-[22px]">Label12</p>
        <p className="mt-1.5">编制单位：ABC</p>
      </div>
      <div className="w-[179px]">
        <p className="mt-6">Label7</p>
      </div>
      <div className="w-[127px]">
        <p>Label9</p>
        <p className="mt-1">Label8</p>
      </div>
      <div>
        <p className="mt-[7px]">Label10</p>
        <p className="mt-1 flex h-3 items-end overflow-hidden">Label11</p>
      </div>
    </div>
  );
}

function BalanceSheet() {
  return (
    <div className="min-h-0 flex-1 overflow-hidden border-t-2 border-l border-t-[#6b6b6b] border-l-[#6b6b6b] bg-[#ababab]">
      <table className="w-[491px] table-fixed border-separate border-spacing-0 border-r border-b border-[#6b6b6b]">
        <colgroup>
          <col className="w-10" />
          <col className="w-[300px]" />
          <col className="w-[150px]" />
        </colgroup>
        <thead>
          <tr className="h-5">
            <td className="border-r border-b border-[#9a9a9a] border-r-[#ee9436] bg-[#f0f0f0] p-0 align-bottom">
              <Corner />
            </td>
            <th className={`border-r border-b border-r-[#6b6b6b] border-b-[#ee9436] p-0 font-normal ${GOLD}`}>其他说明</th>
            <th className={SILVER}>期末余额</th>
          </tr>
        </thead>
        <tbody>
          {BALANCES.map((row, i) => {
            const style = BALANCE_STYLES[row.style];
            return (
              <tr key={i} className="h-5">
                <th className={i === 0 ? ROW_HEAD_ACTIVE : ROW_HEAD}>{i + 1}</th>
                <td className={`border-r border-b border-r-[#6b6b6b] border-b-[#ececec] px-1 py-0 ${style.name}`}>{row.name}</td>
                <td className={`border-b border-[#ececec] px-[7px] py-0 text-right ${style.value}`}>{row.value}</td>
              </tr>
            );
          })}
        </tbody>
      </table>
    </div>
  );
}

function TrialBalance() {
  return (
    <section className="flex h-[310px] shrink-0 flex-col">
      <TabStrip tabs={DETAIL_TABS} initial="试算平衡表" className="h-7 border-b-2" />
      <div className="flex-1 overflow-hidden border-t border-l border-[#6b6b6b] bg-[#ababab]">
        <table className="w-[941px] table-fixed border-separate border-spacing-0 border-r border-b border-[#6b6b6b]">
          <colgroup>
            <col className="w-10" />
            <col span={9} className="w-[100px]" />
          </colgroup>
          <thead>
            <tr className="h-5">
              <td className="border-r border-b border-[#9a9a9a] bg-[#f0f0f0] p-0 align-bottom">
                <Corner />
              </td>
              <th rowSpan={2} className={`border border-t-0 border-[#ee9436] p-0 font-normal ${GOLD}`}>ItemID</th>
              <th rowSpan={2} className={SILVER}>项目</th>
              <th rowSpan={2} className={SILVER}>未审数</th>
              <th colSpan={2} className={SILVER}>重分类调整</th>
              <th colSpan={2} className={SILVER}>账项调整</th>
              <th rowSpan={2} className={SILVER}>审定数</th>
              <th rowSpan={2} className={`${SILVER} leading-[17px]`}>
                审定数（折算
                <br />
                后）
              </th>
            </tr>
            <tr className="h-5">
              <td className="border-r border-b border-[#9a9a9a] bg-[#f0f0f0] p-0" />
              <th className={SILVER}>借方</th>
              <th className={SILVER}>贷方</th>
              <th className={SILVER}>借方</th>
              <th className={SILVER}>贷方</th>
            </tr>
          </thead>
        </table>
      </div>
    </section>
  );
}

function StatusBar() {
  return (
    <footer className="shrink-0 font-['Liberation_Sans','Noto_Sans_CJK_SC',sans-serif] text-xs text-[#15428b]">
      <div className="flex h-[23px] items-stretch border-t border-[#567db0] bg-linear-to-b from-[#dbe9fc] via-[#b3cff5] via-45% to-[#d5e5fa]">
        <p className="flex flex-1 items-center pl-[3px] [text-spacing-trim:space-all]">
          当前登陆用户：【系统开发者(U8000001)】,当前软件版本：【0001-01-01 0:00:00】
        </p>
        <p className="flex items-center border-l border-[#567db0] bg-linear-to-b from-[#b5d0f5] via-[#85a9dc] via-40% to-[#7d9fd0] pr-1.5 pl-1">
          计数:0 累计:0 平均:0 最大:0 最小:0
        </p>
      </div>
      <div className="flex h-[3px] justify-center border-t border-black bg-[#dcd8d8]">
        <span className="mr-[204px] w-12 bg-[#f5a66a]" />
      </div>
    </footer>
  );
}

export default function App() {
  return (
    <div className="flex h-screen flex-col overflow-hidden bg-[#dde8ed] font-['Noto_Sans','Noto_Sans_CJK_SC',sans-serif] text-xs leading-[18px] text-black">
      <TitleBar />
      <RibbonTabs />
      <Ribbon />
      <main className="mt-px flex min-h-0 flex-1">
        <div className="flex w-[7px] shrink-0 items-center">
          <svg width="7" height="22" viewBox="0 0 7 22" aria-hidden="true">
            <path d="M0 0h4l2 3v16l-2 3H0z" fill="#c9dcf4" stroke="#8fb2e6" />
            <path d="M1 7v8l4-4z" fill="#3b66ad" />
          </svg>
        </div>
        <div className="flex min-w-0 flex-1 flex-col border-l border-[#8fb2e6] bg-[#eaf2fb]">
          <DocumentTabs />
          <div className="flex min-h-0 flex-1 px-px">
            <aside className="flex w-[300px] shrink-0 flex-col gap-1">
              <FilterPanel />
              <CompanyTree />
            </aside>
            <div className="flex w-[9px] shrink-0 items-center">
              <SplitterGrip />
            </div>
            <div className="flex min-w-0 flex-1 flex-col border border-[#6b6b6b]">
              <TabStrip tabs={["单体附注", "合并附注"]} initial="单体附注" className="h-[27px] border-b" />
              <TabStrip
                tabs={["单体附注（未审）", "单体附注（调整）", "单体附注（审定）", "平衡检查"]}
                initial="单体附注（未审）"
                className="h-7 border-b-2"
                tabClassName="h-6 pr-[9px] pl-2"
              />
              <TabStrip
                tabs={["2021-12-31", "2020-12-31", "2019-12-31", "2018-12-31"]}
                initial="2021-12-31"
                className="h-6"
                tabClassName="h-[21px] pr-4 pl-2 pt-px"
              />
              <div className="flex min-h-0 flex-1">
                <NotesColumn />
                <div className="flex w-[9px] shrink-0 items-center">
                  <SplitterGrip />
                </div>
                <div className="flex min-w-0 flex-1 flex-col gap-[5px] pr-0.5 pb-[5px]">
                  <div className="flex min-h-0 flex-1 flex-col">
                    <SheetLabels />
                    <BalanceSheet />
                  </div>
                  <TrialBalance />
                </div>
              </div>
            </div>
          </div>
        </div>
      </main>
      <StatusBar />
    </div>
  );
}
